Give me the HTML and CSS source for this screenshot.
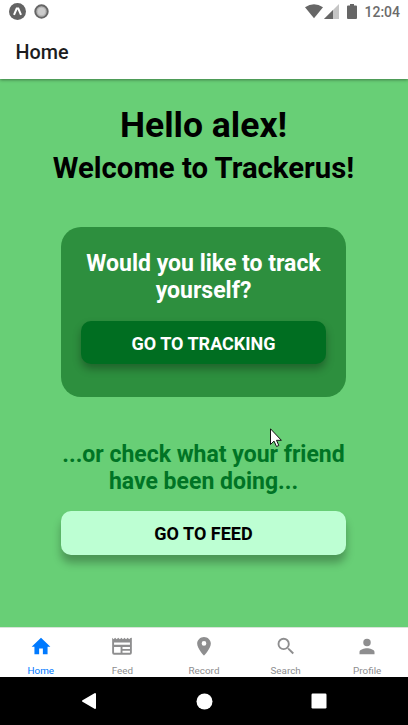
FILE: index.html
```html
<!DOCTYPE html>
<html lang="en">
<head>
<meta charset="utf-8">
<title>Trackerus</title>
<link rel="stylesheet" href="styles.css">
</head>
<body>
<div class="screen">
  <header class="top">
    <div class="status">
      <svg class="expo" width="17" height="17" viewBox="0 0 17 17"><circle cx="8.5" cy="8.5" r="8.5" fill="#636363"/><path d="M5 11.900 7.700 5.500h1.600l2.700 6.400" fill="none" stroke="#fff" stroke-width="2"/></svg>
      <svg class="record" width="15" height="15" viewBox="0 0 15 15"><circle cx="7.5" cy="7.5" r="6.2" fill="#b5b5b5" stroke="#666" stroke-width="2"/><circle cx="7.5" cy="7.5" r="3.7" fill="#ccc"/></svg>
      <svg class="wifi" width="18" height="15" viewBox="0 0 18 15"><path d="M0 3.2Q9-2.6 18 3.2L9 14.3Z" fill="#666"/></svg>
      <svg class="signal" width="15" height="15" viewBox="0 0 15 15"><path d="M0 15 15 0v15Z" fill="#c5c5c5"/><path d="M0 15 9 6v9Z" fill="#666"/></svg>
      <svg class="battery" width="10" height="15" viewBox="0 0 10 15"><path d="M3 0h4v1.500h2q1 0 1 1V14q0 1-1 1H1q-1 0-1-1V2.500q0-1 1-1h2Z" fill="#666"/></svg>
      <span class="clock">12:04</span>
    </div>
    <div class="title">Home</div>
  </header>
  <main class="content">
    <h1 class="hello">Hello alex!</h1>
    <h2 class="welcome">Welcome to Trackerus!</h2>
    <section class="card">
      <p class="prompt">Would you like to track<br>yourself?</p>
      <button class="btn track">GO TO TRACKING</button>
    </section>
    <section class="feed">
      <p class="prompt">...or check what your friend<br>have been doing...</p>
      <button class="btn go-feed">GO TO FEED</button>
    </section>
  </main>
  <nav class="tabs">
    <a class="tab active"><svg width="24" height="24" viewBox="0 0 24 24"><path d="M10 20.500v-6h4v6h5v-8h3L12 3 2 12.500h3v8z"/></svg><span>Home</span></a>
    <a class="tab"><svg width="24" height="24" viewBox="0 0 24 24"><path fill-rule="evenodd" d="M1.500 3 3 4.500 4.700 3 6.300 4.500 8 3l1.700 1.500L11.300 3 13 4.500 14.700 3l1.600 1.500L18 3l1.700 1.500L21 3.200 22.500 3v16q0 2-2 2h-17q-2 0-2-2ZM3.500 8v2.500h17V8ZM3.500 12.700V19h7v-6.300ZM12.500 12.700v2.200h8v-2.200ZM12.500 16.800V19h8v-2.200Z"/></svg><span>Feed</span></a>
    <a class="tab"><svg width="24" height="24" viewBox="0 0 24 24"><path fill-rule="evenodd" d="M12 2C8.130 2 4.700 5.130 4.700 9c0 5.250 7.300 13 7.300 13s7.300-7.750 7.300-13c0-3.870-3.430-7-7.300-7zm0 9.500a2.500 2.500 0 0 1 0-5 2.500 2.500 0 0 1 0 5z"/></svg><span>Record</span></a>
    <a class="tab"><svg width="24" height="24" viewBox="0 0 24 24"><path d="M15.500 14h-.79l-.28-.27A6.471 6.471 0 0 0 16 9.500 6.500 6.500 0 1 0 9.500 16c1.610 0 3.090-.59 4.230-1.570l.27.28v.79l5 4.990L20.490 19l-4.990-5zm-6 0C7.010 14 5 11.990 5 9.500S7.010 5 9.500 5 14 7.010 14 9.500 11.990 14 9.500 14z"/></svg><span>Search</span></a>
    <a class="tab"><svg width="24" height="24" viewBox="0 0 24 24"><path d="M12 12a4 4 0 1 0 0-8 4 4 0 0 0 0 8zm0 2c-2.670 0-8 1.340-8 4v2.500h16v-2.500c0-2.660-5.330-4-8-4z"/></svg><span>Profile</span></a>
  </nav>
  <footer class="system">
    <svg width="17" height="18" viewBox="0 0 17 18"><path d="M2 9 14 2v14Z" fill="#fff" stroke="#fff" stroke-width="2" stroke-linejoin="round"/></svg>
    <svg width="17" height="17" viewBox="0 0 17 17"><circle cx="8.500" cy="8.500" r="8" fill="#fff"/></svg>
    <svg width="16" height="16" viewBox="0 0 16 16"><rect x=".5" y=".5" width="15" height="15" rx="1.200" fill="#fff"/></svg>
  </footer>
  <svg class="cursor" width="13" height="20" viewBox="0 0 13 20"><path d="M.5.800v15.700L4 13.100l2.500 5.400 2.300-1-2.300-5.200h4.900Z" fill="#fff" stroke="#111" stroke-width="1"/></svg>
</div>
</body>
</html>
```
FILE: styles.css
```css
* { box-sizing: border-box; }
body { margin: 0; font-family: Roboto, sans-serif; }
.screen {
  position: relative;
  display: flex;
  flex-direction: column;
  width: 408px;
  height: 725px;
  overflow: hidden;
  background: #68cf76;
}
.top {
  height: 79px;
  background: #fff;
  box-shadow: 0 1px 3px rgba(0, 0, 0, .4);
  z-index: 1;
}
.status {
  display: flex;
  align-items: center;
  height: 24px;
  padding: 0 8px 1px 9px;
}
.record { margin-left: 8px; }
.wifi { margin-left: auto; }
.signal { margin-left: 1px; }
.battery { margin-left: 8px; }
.clock {
  margin-left: 7px;
  padding-top: 1px;
  font-size: 14px;
  font-weight: 500;
  line-height: 24px;
  color: #6b6b6b;
}
.title {
  padding: 1px 0 0 15.500px;
  font-size: 19.800px;
  font-weight: 500;
  line-height: 56px;
  color: #1c1c1e;
}
.content {
  flex: 1;
  display: flex;
  flex-direction: column;
  align-items: center;
  padding: 25px 1px 0 0;
}
.hello, .welcome, .prompt { margin: 0; font-weight: 700; text-align: center; white-space: nowrap; }
.hello { font-size: 35.500px; line-height: 42px; }
.welcome { margin-top: 1px; font-size: 29.300px; line-height: 42px; }
.card {
  width: 285.500px;
  height: 169.500px;
  margin-top: 38px;
  padding: 23px 20px 0;
  border-radius: 20px;
  background: #2d8f3e;
}
.prompt { font-size: 23px; line-height: 27px; }
.card .prompt { color: #fff; }
.btn {
  display: block;
  width: 100%;
  height: 43.500px;
  padding: 1px 0 0;
  border: 0;
  border-radius: 10px;
  font: 700 18px/43px Roboto, sans-serif;
  text-align: center;
}
.track {
  margin-top: 16.500px;
  color: #fff;
  background: #006e21;
  box-shadow: 0 5px 8px rgba(0, 0, 0, .3);
}
.feed { width: 285.500px; margin-top: 44.500px; }
.feed .prompt { display: flow-root; color: #007425; }
.go-feed {
  margin-top: 16px;
  color: #000;
  background: #bdffd3;
  box-shadow: 0 8px 9px rgba(0, 0, 0, .28);
}
.tabs {
  display: flex;
  height: 50px;
  border-top: 1px solid #d8e4d9;
  background: #fff;
}
.tab {
  flex: 1;
  display: flex;
  flex-direction: column;
  align-items: center;
  padding-top: 6.500px;
  color: #8e8e8f;
  font-size: 9.900px;
  line-height: 12px;
}
.tab svg { fill: currentColor; }
.tab span { margin-top: 8px; }
.tab.active { color: #007aff; }
.system {
  display: flex;
  align-items: center;
  justify-content: space-between;
  height: 48px;
  padding: 0 81px;
  background: #000;
}
.cursor { position: absolute; left: 270px; top: 428px; }
```
